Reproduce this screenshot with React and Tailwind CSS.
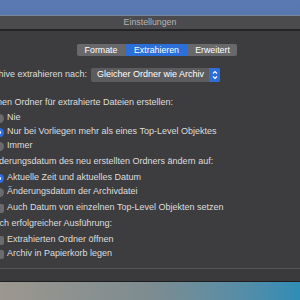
import React from "react"

const Radio = ({ checked }) => (
    <span
        className={`w-[9px] h-[9px] rounded-full flex items-center justify-center shrink-0 ${
            checked ? "bg-[#2f6fe3]" : "bg-[#6b6b6d]"
        }`}
    >
        {checked && <span className="w-[3px] h-[3px] rounded-full bg-white" />}
    </span>
)

const Check = () => <span className="w-[9px] h-[9px] rounded-[2px] bg-[#6b6b6d] shrink-0" />

const Option = ({ children, control }) => (
    <div className="h-[14px] flex items-center gap-[3px] pl-[1px] whitespace-nowrap">
        {control}
        <span>{children}</span>
    </div>
)

export default function App() {
    return (
        <div
            className="w-[300px] h-[300px] overflow-hidden flex flex-col bg-[#3d3d3f] text-[9px] text-[#dedede]"
            style={{ fontFamily: '"Liberation Sans", Arial, sans-serif' }}
        >
            {/* desktop above the window */}
            <div className="h-[15px] bg-gradient-to-b from-[#5a78b3] to-[#5876ae]" />
            <div className="h-[1px] bg-[#7a8699]" />

            {/* title bar */}
            <div className="h-[13px] bg-[#4b4b4d] flex items-center justify-center text-[#b4b4b4] text-[8.8px]">
                Einstellungen
            </div>
            <div className="h-[2px] bg-[#242426]" />

            {/* tabs */}
            <div className="pt-[13px] flex justify-center">
                <div className="flex h-[12px] rounded-[2px] bg-[#69696b] text-white text-[8.8px] leading-[12px] ml-[14px]">
                    <div className="w-[48px] text-center">Formate</div>
                    <div className="w-[63px] text-center bg-[#2c6fd8]">Extrahieren</div>
                    <div className="w-[49px] text-center">Erweitert</div>
                </div>
            </div>

            {/* content */}
            <div className="ml-[-16px] mt-[12px] flex flex-col whitespace-nowrap">
                <div className="flex items-center h-[14px]">
                    <span className="w-[107px] shrink-0 text-right pr-[4px]">Archive extrahieren nach:</span>
                    <div className="flex items-center h-[14px] w-[129px] rounded-[2px] bg-[#5c5c5e] text-white">
                        <span className="flex-1 pl-[6px]">Gleicher Ordner wie Archiv</span>
                        <span className="w-[11px] h-[14px] rounded-r-[2px] bg-[#2c6fd8] flex items-center justify-center">
                            <svg width="6" height="10" viewBox="0 0 6 10" fill="none" stroke="white" strokeWidth="1.1">
                                <path d="M1 3.5 L3 1.5 L5 3.5" />
                                <path d="M1 6.5 L3 8.5 L5 6.5" />
                            </svg>
                        </span>
                    </div>
                </div>

                <div className="mt-[14px] pl-[5px] h-[14px] flex items-center">
                    Einen Ordner für extrahierte Dateien erstellen:
                </div>
                <div className="pl-[10px] mt-[1px]">
                    <Option control={<Radio />}>Nie</Option>
                    <Option control={<Radio checked />}>Nur bei Vorliegen mehr als eines Top-Level Objektes</Option>
                    <Option control={<Radio />}>Immer</Option>
                </div>

                <div className="mt-[2px] pl-[4px] h-[14px] flex items-center">
                    Änderungsdatum des neu erstellten Ordners ändern auf:
                </div>
                <div className="pl-[10px] mt-[2px]">
                    <Option control={<Radio checked />}>Aktuelle Zeit und aktuelles Datum</Option>
                    <Option control={<Radio />}>Änderungsdatum der Archivdatei</Option>
                    <div className="mt-[2px]">
                        <Option control={<Check />}>Auch Datum von einzelnen Top-Level Objekten setzen</Option>
                    </div>
                </div>

                <div className="mt-[2px] pl-[4px] h-[14px] flex items-center">Nach erfolgreicher Ausführung:</div>
                <div className="pl-[10px] mt-[2px]">
                    <Option control={<Check />}>Extrahierten Ordner öffnen</Option>
                    <Option control={<Check />}>Archiv in Papierkorb legen</Option>
                </div>
            </div>

            <div className="flex-1" />

            {/* bottom edge of the window */}
            <div className="h-[1px] bg-[#56565a]" />
            <div className="h-[12px] bg-[#3a3a3c]" />
            <div className="h-[1px] bg-[#1e1e20]" />

            {/* wallpaper below */}
            <div className="h-[18px] bg-gradient-to-r from-[#9c978f] via-[#7d8c90] to-[#2f8db5]" />
        </div>
    )
}
